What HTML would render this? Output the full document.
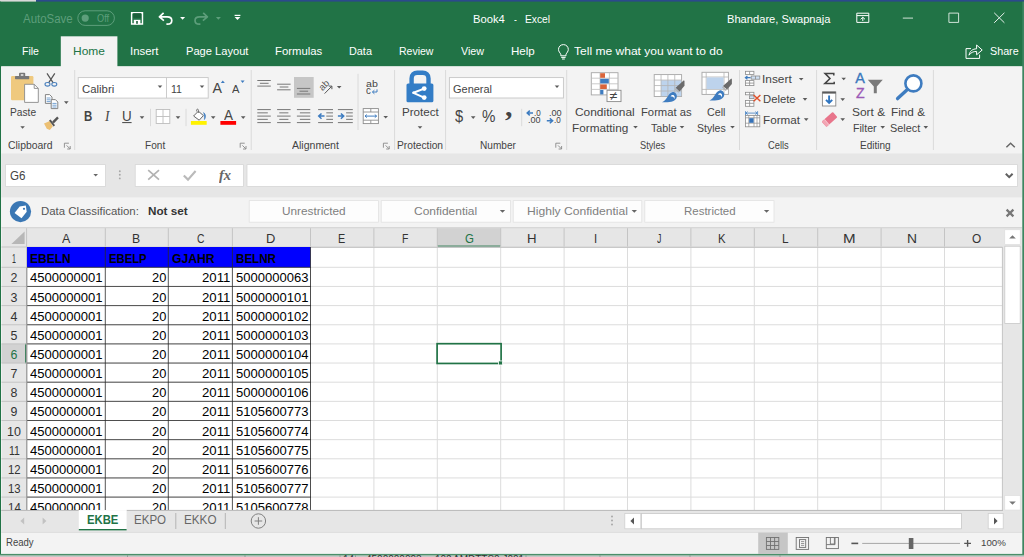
<!DOCTYPE html>
<html lang="en"><head><meta charset="utf-8"><title>Book4 - Excel</title>
<style>
html,body{margin:0;padding:0;}
body{width:1024px;height:557px;overflow:hidden;position:relative;background:#f3f3f3;font-family:"Liberation Sans", sans-serif;}
.t{position:absolute;white-space:pre;line-height:1;transform-origin:0 0;font-family:"Liberation Sans", sans-serif;}
svg{position:absolute;left:0;top:0;overflow:visible;}
</style></head><body>
<svg width="1024" height="557" viewBox="0 0 1024 557">
<rect x="0" y="0" width="1024" height="557" fill="#f3f3f3"/>
<rect x="0" y="0" width="1024" height="66.4" fill="#217346"/>
<rect x="0" y="0" width="36" height="1.6" fill="#d9d9d9"/>
<rect x="36" y="0" width="988" height="1.6" fill="#2b4a8c"/>
<rect x="60.8" y="36.3" width="56.6" height="30.7" fill="#f3f3f3"/>
<rect x="1.3" y="66.4" width="1021.1" height="87.1" fill="#f3f3f3"/>
<rect x="1.3" y="153.5" width="1020.7" height="44.1" fill="#e6e6e6"/>
<rect x="1.3" y="197.6" width="1020.7" height="30" fill="#f3f3f3"/>
<rect x="1.3" y="227.6" width="1020.7" height="282.4" fill="#ffffff"/>
<rect x="1.3" y="510" width="1020.7" height="22.4" fill="#e6e6e6"/>
<rect x="1.3" y="532.4" width="1020.7" height="21.6" fill="#f3f3f3"/>
<rect x="0" y="555.4" width="1024" height="1.6" fill="#c6c6c6"/>
<line x1="127.5" y1="555.4" x2="127.5" y2="557" stroke="#9a9a9a" stroke-width="1"/>
<line x1="245" y1="555.4" x2="245" y2="557" stroke="#9a9a9a" stroke-width="1"/>
<line x1="340" y1="555.4" x2="340" y2="557" stroke="#9a9a9a" stroke-width="1"/>
<line x1="355.5" y1="555.4" x2="355.5" y2="557" stroke="#9a9a9a" stroke-width="1"/>
<line x1="411" y1="555.4" x2="411" y2="557" stroke="#9a9a9a" stroke-width="1"/>
<line x1="450" y1="555.4" x2="450" y2="557" stroke="#9a9a9a" stroke-width="1"/>
<line x1="526" y1="555.4" x2="526" y2="557" stroke="#9a9a9a" stroke-width="1"/>
<line x1="600" y1="555.4" x2="600" y2="557" stroke="#9a9a9a" stroke-width="1"/>
<line x1="690" y1="555.4" x2="690" y2="557" stroke="#9a9a9a" stroke-width="1"/>
<line x1="780" y1="555.4" x2="780" y2="557" stroke="#9a9a9a" stroke-width="1"/>
<rect x="0" y="1.6" width="1" height="553.4" fill="#217346"/>
<rect x="1022.3" y="1.6" width="1.7" height="553.4" fill="#3d8560"/>
<rect x="0" y="553.9" width="1024" height="1.5" fill="#4a8f69"/>
<rect x="77.8" y="10.8" width="36.6" height="14.6" fill="none" stroke="#5d9e7b" stroke-width="1" rx="7.3"/>
<circle cx="85.2" cy="18.1" r="3.6" fill="#5d9e7b"/>
<path d="M131.6 12.7H142.5V24H131.6Z" fill="none" stroke="#ffffff" stroke-width="1.4"/>
<rect x="133.2" y="13.2" width="7.8" height="4.6" fill="#1b5e3a"/>
<rect x="133.8" y="19.8" width="6.6" height="4.4" fill="#ffffff"/>
<rect x="136.2" y="21" width="1.6" height="2.8" fill="#1b5e3a"/>
<path d="M163.6 12.8L159.4 16.8L163.9 20.6M159.8 16.8H167.2C173.2 16.8 173.4 24 167.2 24.2H166.4" fill="none" stroke="#ffffff" stroke-width="1.7" stroke-linejoin="round" stroke-linecap="butt"/>
<path d="M180.1 17H185.1L182.6 19.8Z" fill="#ffffff"/>
<path d="M203.2 12.8L207.4 16.8L202.9 20.6M207 16.8H199.6C193.6 16.8 193.4 24 199.6 24.2H200.4" fill="none" stroke="#5d9e7b" stroke-width="1.7" stroke-linejoin="round"/>
<path d="M215.9 17H220.9L218.4 19.8Z" fill="#5d9e7b"/>
<rect x="234.6" y="14.8" width="5.8" height="1.2" fill="#ffffff"/>
<path d="M234.6 17.1H240.4L237.5 20.1Z" fill="#ffffff"/>
<path d="M856.8 13.2H868.8V22.4H856.8Z" fill="none" stroke="#ffffff" stroke-width="1"/>
<line x1="856.8" y1="15.6" x2="868.8" y2="15.6" stroke="#ffffff" stroke-width="1"/>
<path d="M862.8 21V17.4M860.6 19.3L862.8 17.2L865 19.3" fill="none" stroke="#ffffff" stroke-width="1"/>
<line x1="902.8" y1="18.1" x2="913" y2="18.1" stroke="#e4efe9" stroke-width="0.9"/>
<path d="M948.9 13.1H958.6V22.4H948.9Z" fill="none" stroke="#e4efe9" stroke-width="0.9"/>
<path d="M994.2 12.8L1004.4 22.8M1004.4 12.8L994.2 22.8" fill="none" stroke="#e9f2ed" stroke-width="1"/>
<path d="M563.4 44.6C560.4 44.6 558.5 46.9 558.5 49.4C558.5 51.6 560 52.7 560.8 54.2V55.8H566V54.2C566.8 52.7 568.3 51.6 568.3 49.4C568.3 46.9 566.4 44.6 563.4 44.6Z" fill="none" stroke="#ffffff" stroke-width="1"/>
<line x1="561.2" y1="57.4" x2="565.6" y2="57.4" stroke="#ffffff" stroke-width="1"/>
<line x1="562" y1="59" x2="564.8" y2="59" stroke="#ffffff" stroke-width="1"/>
<path d="M971 48.6H966V58.4H979.6V54.6" fill="none" stroke="#ffffff" stroke-width="1"/>
<path d="M969 55.2C969.8 51 972.6 48.9 976.6 48.8V45L982.2 50L976.6 54.8V51.4C973.2 51.4 970.8 52.6 969 55.2Z" fill="none" stroke="#ffffff" stroke-width="1" stroke-linejoin="round"/>
<line x1="74.7" y1="70" x2="74.7" y2="150" stroke="#dadada" stroke-width="1"/>
<line x1="251.2" y1="70" x2="251.2" y2="150" stroke="#dadada" stroke-width="1"/>
<line x1="394.6" y1="70" x2="394.6" y2="150" stroke="#dadada" stroke-width="1"/>
<line x1="445.6" y1="70" x2="445.6" y2="150" stroke="#dadada" stroke-width="1"/>
<line x1="566.7" y1="70" x2="566.7" y2="150" stroke="#dadada" stroke-width="1"/>
<line x1="739.5" y1="70" x2="739.5" y2="150" stroke="#dadada" stroke-width="1"/>
<line x1="816.6" y1="70" x2="816.6" y2="150" stroke="#dadada" stroke-width="1"/>
<line x1="933.4" y1="70" x2="933.4" y2="150" stroke="#dadada" stroke-width="1"/>
<rect x="11" y="76" width="22.4" height="24.3" fill="#efc97e" rx="1.2"/>
<rect x="15" y="76" width="14.2" height="3.2" fill="#787878" rx="0.6"/>
<rect x="19" y="72.8" width="6.2" height="4.2" fill="#787878" rx="1"/>
<rect x="20.8" y="74.2" width="2.6" height="1.6" fill="#e8e8e8"/>
<path d="M24.6 84.3H34.2L38.3 88.4V102.4H24.6Z" fill="#ffffff" stroke="#8a8a8a" stroke-width="0.9"/>
<path d="M34.2 84.3V88.4H38.3" fill="none" stroke="#8a8a8a" stroke-width="0.9"/>
<path d="M20.3 126.2H24.9L22.6 128.8Z" fill="#5a5a5a"/>
<path d="M47 73.4L53.2 82.8M54.8 73.4L48.6 82.8" fill="none" stroke="#555" stroke-width="1.2"/>
<ellipse cx="47.5" cy="84.3" rx="2.5" ry="1.8" fill="none" stroke="#4a80bd" stroke-width="1.1"/>
<ellipse cx="54.3" cy="84.3" rx="2.5" ry="1.8" fill="none" stroke="#4a80bd" stroke-width="1.1"/>
<path d="M45.4 94.6H49.6L52 97V103.4H45.4Z" fill="#fff" stroke="#777" stroke-width="0.9"/>
<path d="M51.2 99.6H55.4L57.8 102V108.6H51.2Z" fill="#fff" stroke="#777" stroke-width="0.9"/>
<line x1="46.6" y1="98" x2="50.6" y2="98" stroke="#3e7cc0" stroke-width="0.7"/>
<line x1="46.6" y1="99.8" x2="50.6" y2="99.8" stroke="#3e7cc0" stroke-width="0.7"/>
<line x1="46.6" y1="101.6" x2="50.6" y2="101.6" stroke="#3e7cc0" stroke-width="0.7"/>
<line x1="52.4" y1="103.4" x2="56.6" y2="103.4" stroke="#3e7cc0" stroke-width="0.7"/>
<line x1="52.4" y1="105.2" x2="56.6" y2="105.2" stroke="#3e7cc0" stroke-width="0.7"/>
<line x1="52.4" y1="107" x2="56.6" y2="107" stroke="#3e7cc0" stroke-width="0.7"/>
<path d="M64 101.3H68.6L66.3 103.9Z" fill="#5a5a5a"/>
<path d="M44 123.6L49.8 121L52.8 126.4L49.8 129.9L46.8 128.8Z" fill="#ecc074"/>
<path d="M49 120.6L50.6 119.6L55 125.2L53.6 126.6Z" fill="#555"/>
<path d="M52.2 121.6L57.2 116.6L58.8 118.2L53.8 123.4Z" fill="#555"/>
<path d="M64.4 147.7V143.2H68.9" fill="none" stroke="#888" stroke-width="0.9"/>
<path d="M66.6 145.4L70 148.8M70.2 146V149H67.2" fill="none" stroke="#888" stroke-width="0.9"/>
<rect x="78.2" y="77.6" width="130" height="20.5" fill="#ffffff" stroke="#c6c6c6" stroke-width="0.9"/>
<line x1="166.5" y1="77.6" x2="166.5" y2="98.1" stroke="#c6c6c6" stroke-width="0.9"/>
<path d="M157.7 85.5H162.3L160 88.1Z" fill="#5a5a5a"/>
<path d="M199.7 85.5H204.3L202 88.1Z" fill="#5a5a5a"/>
<path d="M220.8 83L222.8 80.6L224.8 83Z" fill="#3e7cc0"/>
<path d="M240.6 80.6L242.6 83L244.6 80.6Z" fill="#3e7cc0"/>
<line x1="122.2" y1="122.6" x2="131.6" y2="122.6" stroke="#444444" stroke-width="1"/>
<path d="M139.7 116.3H144.3L142 118.9Z" fill="#5a5a5a"/>
<line x1="150.5" y1="108.8" x2="150.5" y2="126.2" stroke="#dadada" stroke-width="1"/>
<rect x="156.2" y="109.5" width="13.6" height="14" fill="#fff" stroke="#bdbdbd" stroke-width="0.9"/>
<line x1="163" y1="109.5" x2="163" y2="123.5" stroke="#bdbdbd" stroke-width="0.9"/>
<line x1="156.2" y1="116.5" x2="169.8" y2="116.5" stroke="#bdbdbd" stroke-width="0.9"/>
<path d="M175.7 116.3H180.3L178 118.9Z" fill="#5a5a5a"/>
<line x1="186" y1="108.8" x2="186" y2="126.2" stroke="#dadada" stroke-width="1"/>
<path d="M198.4 111.2L203.4 115.6L199.2 120.2L193.6 116Z" fill="#fff" stroke="#666" stroke-width="1"/>
<path d="M198.4 113V110.2C198.4 108.8 196.6 108.8 196.6 110.2V111.4" fill="none" stroke="#666" stroke-width="0.9"/>
<path d="M203.6 112.6C206 114.4 206 117.4 204.4 119.6C204.6 117 204.4 115 203.6 112.6Z" fill="#3e7cc0" stroke="#3e7cc0" stroke-width="0.6"/>
<rect x="190.9" y="121" width="15.8" height="3.8" fill="#fff200"/>
<path d="M210.9 116.3H215.5L213.2 118.9Z" fill="#5a5a5a"/>
<rect x="220.4" y="121" width="15.7" height="3.8" fill="#ff0000"/>
<path d="M240.9 116.3H245.5L243.2 118.9Z" fill="#5a5a5a"/>
<path d="M240.2 147.7V143.2H244.7" fill="none" stroke="#888" stroke-width="0.9"/>
<path d="M242.4 145.4L245.8 148.8M246 146V149H243" fill="none" stroke="#888" stroke-width="0.9"/>
<line x1="257.3" y1="80.5" x2="270.8" y2="80.5" stroke="#777777" stroke-width="1"/>
<line x1="259.9" y1="83.3" x2="268.6" y2="83.3" stroke="#777777" stroke-width="1"/>
<line x1="257.3" y1="86.1" x2="270.8" y2="86.1" stroke="#777777" stroke-width="1"/>
<line x1="277.1" y1="84.2" x2="290.6" y2="84.2" stroke="#777777" stroke-width="1"/>
<line x1="279.7" y1="87" x2="288.4" y2="87" stroke="#777777" stroke-width="1"/>
<line x1="277.1" y1="89.8" x2="290.6" y2="89.8" stroke="#777777" stroke-width="1"/>
<rect x="294" y="77" width="19.7" height="20.8" fill="#c6c6c6"/>
<line x1="296.9" y1="88.4" x2="310.3" y2="88.4" stroke="#777777" stroke-width="1"/>
<line x1="299.5" y1="91.2" x2="308.1" y2="91.2" stroke="#777777" stroke-width="1"/>
<line x1="296.9" y1="94" x2="310.3" y2="94" stroke="#777777" stroke-width="1"/>
<text x="0" y="0" transform="translate(322.4 91.2) rotate(-45)" font-family="Liberation Sans, sans-serif" font-size="9.5" fill="#555">ab</text>
<path d="M324.6 93.6L331.6 86.4M331.9 89.2V86.1H328.8" fill="none" stroke="#555" stroke-width="1"/>
<path d="M336.9 85.9H341.5L339.2 88.5Z" fill="#5a5a5a"/>
<line x1="358" y1="73.8" x2="358" y2="130" stroke="#dadada" stroke-width="1"/>
<path d="M377 89.4V92H372.6M374.4 90.2L372.4 92L374.4 93.8" fill="none" stroke="#3e7cc0" stroke-width="1"/>
<line x1="257.3" y1="109.6" x2="270.8" y2="109.6" stroke="#777777" stroke-width="1"/>
<line x1="257.3" y1="112.85" x2="267.8" y2="112.85" stroke="#777777" stroke-width="1"/>
<line x1="257.3" y1="116.1" x2="270.8" y2="116.1" stroke="#777777" stroke-width="1"/>
<line x1="257.3" y1="119.35" x2="267.8" y2="119.35" stroke="#777777" stroke-width="1"/>
<line x1="257.3" y1="122.6" x2="270.8" y2="122.6" stroke="#777777" stroke-width="1"/>
<line x1="277.1" y1="109.6" x2="290.6" y2="109.6" stroke="#777777" stroke-width="1"/>
<line x1="279.3" y1="112.85" x2="288.4" y2="112.85" stroke="#777777" stroke-width="1"/>
<line x1="277.1" y1="116.1" x2="290.6" y2="116.1" stroke="#777777" stroke-width="1"/>
<line x1="279.3" y1="119.35" x2="288.4" y2="119.35" stroke="#777777" stroke-width="1"/>
<line x1="277.1" y1="122.6" x2="290.6" y2="122.6" stroke="#777777" stroke-width="1"/>
<line x1="296.9" y1="109.6" x2="310.3" y2="109.6" stroke="#777777" stroke-width="1"/>
<line x1="299.9" y1="112.85" x2="310.3" y2="112.85" stroke="#777777" stroke-width="1"/>
<line x1="296.9" y1="116.1" x2="310.3" y2="116.1" stroke="#777777" stroke-width="1"/>
<line x1="299.9" y1="119.35" x2="310.3" y2="119.35" stroke="#777777" stroke-width="1"/>
<line x1="296.9" y1="122.6" x2="310.3" y2="122.6" stroke="#777777" stroke-width="1"/>
<line x1="318.1" y1="109.6" x2="333" y2="109.6" stroke="#777777" stroke-width="1"/>
<line x1="326.3" y1="112.85" x2="333" y2="112.85" stroke="#777777" stroke-width="1"/>
<line x1="326.3" y1="116.1" x2="333" y2="116.1" stroke="#777777" stroke-width="1"/>
<line x1="326.3" y1="119.35" x2="333" y2="119.35" stroke="#777777" stroke-width="1"/>
<line x1="318.1" y1="122.6" x2="333" y2="122.6" stroke="#777777" stroke-width="1"/>
<path d="M324.5 116.1H319.1M321.5 113.5L318.7 116.1L321.5 118.7" fill="none" stroke="#3e7cc0" stroke-width="1.5"/>
<line x1="337.9" y1="109.6" x2="352.8" y2="109.6" stroke="#777777" stroke-width="1"/>
<line x1="346.1" y1="112.85" x2="352.8" y2="112.85" stroke="#777777" stroke-width="1"/>
<line x1="346.1" y1="116.1" x2="352.8" y2="116.1" stroke="#777777" stroke-width="1"/>
<line x1="346.1" y1="119.35" x2="352.8" y2="119.35" stroke="#777777" stroke-width="1"/>
<line x1="337.9" y1="122.6" x2="352.8" y2="122.6" stroke="#777777" stroke-width="1"/>
<path d="M337.9 116.1H343.3M340.9 113.5L343.7 116.1L340.9 118.7" fill="none" stroke="#3e7cc0" stroke-width="1.5"/>
<rect x="363.2" y="108.6" width="15.2" height="15" fill="#fff" stroke="#8c8c8c" stroke-width="0.9"/>
<line x1="363.2" y1="112" x2="378.4" y2="112" stroke="#8c8c8c" stroke-width="0.9"/>
<line x1="363.2" y1="120.2" x2="378.4" y2="120.2" stroke="#8c8c8c" stroke-width="0.9"/>
<line x1="370.8" y1="108.6" x2="370.8" y2="112" stroke="#8c8c8c" stroke-width="0.9"/>
<line x1="370.8" y1="120.2" x2="370.8" y2="123.6" stroke="#8c8c8c" stroke-width="0.9"/>
<path d="M365 116.1H376.6M366.8 114.6L365 116.1L366.8 117.6M374.8 114.6L376.6 116.1L374.8 117.6" fill="none" stroke="#3e7cc0" stroke-width="1"/>
<path d="M383.4 115.9H388L385.7 118.5Z" fill="#5a5a5a"/>
<path d="M383.4 147.7V143.2H387.9" fill="none" stroke="#888" stroke-width="0.9"/>
<path d="M385.6 145.4L389 148.8M389.2 146V149H386.2" fill="none" stroke="#888" stroke-width="0.9"/>
<path d="M411.6 84V78.4C411.6 74.6 414 72.8 417.2 72.8H422.8C426 72.8 428.5 74.6 428.5 78.4V84" fill="none" stroke="#337dc6" stroke-width="4.4"/>
<rect x="406.5" y="83.5" width="26.9" height="18.8" fill="#337dc6" rx="1.6"/>
<path d="M424.1 88.6L413.4 92.8L424.1 97.6" fill="none" stroke="#fff" stroke-width="2" stroke-linejoin="round" stroke-linecap="round"/>
<circle cx="424.2" cy="88.6" r="2.4" fill="#fff"/>
<circle cx="424.2" cy="97.6" r="2.4" fill="#fff"/>
<circle cx="413.6" cy="92.8" r="1.3" fill="#fff"/>
<path d="M417.7 126.2H422.3L420 128.8Z" fill="#5a5a5a"/>
<rect x="449.4" y="77.6" width="114" height="20.4" fill="#ffffff" stroke="#c6c6c6" stroke-width="0.9"/>
<path d="M554.7 85.5H559.3L557 88.1Z" fill="#5a5a5a"/>
<path d="M470.9 116.3H475.5L473.2 118.9Z" fill="#5a5a5a"/>
<line x1="521.7" y1="108.8" x2="521.7" y2="126.2" stroke="#dadada" stroke-width="1"/>
<path d="M527.4 113H533M529.8 110.6L527.2 113L529.8 115.4" fill="none" stroke="#3e7cc0" stroke-width="1.5"/>
<path d="M546.8 120.8H552.4M549.8 118.4L552.6 120.8L549.8 123.2" fill="none" stroke="#3e7cc0" stroke-width="1.5"/>
<path d="M555.8 147.7V143.2H560.3" fill="none" stroke="#888" stroke-width="0.9"/>
<path d="M558 145.4L561.4 148.8M561.6 146V149H558.6" fill="none" stroke="#888" stroke-width="0.9"/>
<rect x="591.3" y="72.7" width="26.7" height="22.2" fill="#fff" stroke="#a6a6a6" stroke-width="0.9"/>
<line x1="591.3" y1="78.2" x2="618" y2="78.2" stroke="#bdbdbd" stroke-width="0.8"/>
<line x1="591.3" y1="83.8" x2="618" y2="83.8" stroke="#bdbdbd" stroke-width="0.8"/>
<line x1="591.3" y1="89.4" x2="618" y2="89.4" stroke="#bdbdbd" stroke-width="0.8"/>
<line x1="600" y1="72.7" x2="600" y2="94.9" stroke="#bdbdbd" stroke-width="0.8"/>
<line x1="609.4" y1="72.7" x2="609.4" y2="94.9" stroke="#bdbdbd" stroke-width="0.8"/>
<rect x="600.2" y="73.2" width="4.8" height="4.6" fill="#d9643a"/>
<rect x="600.2" y="78.8" width="8.6" height="4.6" fill="#3e7cc0"/>
<rect x="600.2" y="84.4" width="6.6" height="4.6" fill="#d9643a"/>
<rect x="600.2" y="90" width="3.2" height="4.4" fill="#3e7cc0"/>
<rect x="607" y="90.3" width="14" height="11.3" fill="#fff" stroke="#8a8a8a" stroke-width="0.9"/>
<path d="M633.2 125.9H637.8L635.5 128.5Z" fill="#5a5a5a"/>
<rect x="654.2" y="74.6" width="27.4" height="21.9" fill="#fff" stroke="#a6a6a6" stroke-width="0.9"/>
<rect x="661" y="80.2" width="20.2" height="15.9" fill="#bdd3ec"/>
<line x1="661.05" y1="74.6" x2="661.05" y2="96.5" stroke="#b4b4b4" stroke-width="0.8"/>
<line x1="667.9" y1="74.6" x2="667.9" y2="96.5" stroke="#b4b4b4" stroke-width="0.8"/>
<line x1="674.75" y1="74.6" x2="674.75" y2="96.5" stroke="#b4b4b4" stroke-width="0.8"/>
<line x1="654.2" y1="80.07" x2="681.6" y2="80.07" stroke="#b4b4b4" stroke-width="0.8"/>
<line x1="654.2" y1="85.55" x2="681.6" y2="85.55" stroke="#b4b4b4" stroke-width="0.8"/>
<line x1="654.2" y1="91.03" x2="681.6" y2="91.03" stroke="#b4b4b4" stroke-width="0.8"/>
<path d="M683.9 80.3L684.5 81L684.5 85.8L679.6 91.4L675.6 87.8Z" fill="#6b6b6b"/>
<path d="M674.6 89L675.4 88.2L679.2 91.8L678.4 92.8Z" fill="#b0b0b0"/>
<path d="M662 102.2C667.4 100.2 667.6 93.6 672.2 92.2C674.4 91.6 677.4 94 676.8 97C675.8 101.8 669 102.8 662 102.2Z" fill="#3e7cc0"/>
<path d="M670.6 96.6C672.2 93.6 676 95.4 674.2 99.2C674.2 97 672.8 96 670.6 96.6Z" fill="#fff"/>
<path d="M679.7 125.9H684.3L682 128.5Z" fill="#5a5a5a"/>
<rect x="702" y="72.3" width="26.4" height="22.1" fill="#fff" stroke="#a6a6a6" stroke-width="0.9"/>
<line x1="702" y1="77" x2="728.4" y2="77" stroke="#b4b4b4" stroke-width="0.8"/>
<line x1="702" y1="89.4" x2="728.4" y2="89.4" stroke="#b4b4b4" stroke-width="0.8"/>
<line x1="706.2" y1="72.3" x2="706.2" y2="94.4" stroke="#b4b4b4" stroke-width="0.8"/>
<line x1="724" y1="72.3" x2="724" y2="94.4" stroke="#b4b4b4" stroke-width="0.8"/>
<rect x="706.6" y="77.4" width="17" height="11.6" fill="#bdd3ec"/>
<path d="M731.3 78.5L731.9 79.2L731.9 84L727 89.6L723 86Z" fill="#6b6b6b"/>
<path d="M722 87.2L722.8 86.4L726.6 90L725.8 91Z" fill="#b0b0b0"/>
<path d="M709.4 100.4C714.8 98.4 715 91.8 719.6 90.4C721.8 89.8 724.8 92.2 724.2 95.2C723.2 100 716.4 101 709.4 100.4Z" fill="#3e7cc0"/>
<path d="M718 94.8C719.6 91.8 723.4 93.6 721.6 97.4C721.6 95.2 720.2 94.2 718 94.8Z" fill="#fff"/>
<path d="M730.2 125.9H734.8L732.5 128.5Z" fill="#5a5a5a"/>
<rect x="745.4" y="71.3" width="8.5" height="3.2" fill="#fff" stroke="#8c8c8c" stroke-width="0.8"/>
<line x1="749.6" y1="71.3" x2="749.6" y2="74.5" stroke="#8c8c8c" stroke-width="0.8"/>
<rect x="751.2" y="76" width="8.6" height="3.2" fill="#cfe0f3" stroke="#8c8c8c" stroke-width="0.8"/>
<line x1="755.5" y1="76" x2="755.5" y2="79.2" stroke="#8c8c8c" stroke-width="0.8"/>
<path d="M750.6 77.7H745.6M747.4 76L745.4 77.7L747.4 79.4" fill="none" stroke="#3e7cc0" stroke-width="1.2"/>
<rect x="745.4" y="80.6" width="8.5" height="5" fill="#fff" stroke="#8c8c8c" stroke-width="0.8"/>
<line x1="749.6" y1="80.6" x2="749.6" y2="85.6" stroke="#8c8c8c" stroke-width="0.8"/>
<line x1="745.4" y1="83.1" x2="753.9" y2="83.1" stroke="#8c8c8c" stroke-width="0.8"/>
<path d="M798.9 77.9H803.5L801.2 80.5Z" fill="#5a5a5a"/>
<rect x="745.4" y="92.3" width="8.5" height="2.5" fill="#fff" stroke="#8c8c8c" stroke-width="0.8"/>
<line x1="749.6" y1="92.3" x2="749.6" y2="94.8" stroke="#8c8c8c" stroke-width="0.8"/>
<rect x="749.6" y="95.8" width="4.4" height="2.8" fill="#cfe0f3" stroke="#8c8c8c" stroke-width="0.8"/>
<rect x="745.4" y="100.4" width="8.5" height="5.9" fill="#fff" stroke="#8c8c8c" stroke-width="0.8"/>
<line x1="749.6" y1="100.4" x2="749.6" y2="106.3" stroke="#8c8c8c" stroke-width="0.8"/>
<line x1="745.4" y1="103.3" x2="753.9" y2="103.3" stroke="#8c8c8c" stroke-width="0.8"/>
<path d="M753.6 95L760.4 101.2M760.4 95L753.6 101.2" fill="none" stroke="#e0522d" stroke-width="1.5"/>
<path d="M802.7 98.1H807.3L805 100.7Z" fill="#5a5a5a"/>
<rect x="745.4" y="115.4" width="14.4" height="11.4" fill="#fff" stroke="#8c8c8c" stroke-width="0.8"/>
<line x1="748.8" y1="115.4" x2="748.8" y2="126.8" stroke="#8c8c8c" stroke-width="0.7"/>
<line x1="754" y1="115.4" x2="754" y2="126.8" stroke="#8c8c8c" stroke-width="0.7"/>
<line x1="757" y1="115.4" x2="757" y2="126.8" stroke="#8c8c8c" stroke-width="0.7"/>
<line x1="745.4" y1="117.8" x2="759.8" y2="117.8" stroke="#8c8c8c" stroke-width="0.7"/>
<line x1="745.4" y1="123.2" x2="759.8" y2="123.2" stroke="#8c8c8c" stroke-width="0.7"/>
<rect x="749.2" y="118.2" width="4.4" height="4.6" fill="#3572b8"/>
<path d="M746 113.1H757M747.6 111.6L746 113.1L747.6 114.6M755.4 111.6L757 113.1L755.4 114.6M745.5 111.2V115M757.6 111.2V115" fill="none" stroke="#3e7cc0" stroke-width="0.8"/>
<path d="M803.9 118.3H808.5L806.2 120.9Z" fill="#5a5a5a"/>
<path d="M833.8 75.4V73.4H825L830 78.5L824.8 83.6H834.2V81.8" fill="none" stroke="#444" stroke-width="1.5" stroke-linejoin="miter"/>
<path d="M841.4 77.7H846L843.7 80.3Z" fill="#5a5a5a"/>
<rect x="822.4" y="92" width="13.4" height="14" fill="#fff" stroke="#888" stroke-width="0.9"/>
<rect x="822.4" y="91.6" width="13.4" height="2" fill="#5a5a5a"/>
<path d="M829.1 95.4V103M826 99.8L829.1 103L832.2 99.8" fill="none" stroke="#2f75c0" stroke-width="1.9"/>
<path d="M840.4 98.3H845L842.7 100.9Z" fill="#5a5a5a"/>
<g transform="rotate(-42 829.6 119.4)"><rect x="822.2" y="115.8" width="14.8" height="7.2" rx="1" fill="#e8758b"/><rect x="822.2" y="115.8" width="3.4" height="7.2" rx="1" fill="#f2a5b3"/><rect x="825.4" y="115.8" width="0.7" height="7.2" fill="#f8d5dc"/></g>
<path d="M840.4 118.3H845L842.7 120.9Z" fill="#5a5a5a"/>
<path d="M867.8 79.8H882.8L876.8 86.4V93.2H873.8V86.4Z" fill="#7a7a7a"/>
<path d="M880.4 126.1H885L882.7 128.7Z" fill="#5a5a5a"/>
<circle cx="913.4" cy="83.4" r="8" fill="#fff" stroke="#3e7cc0" stroke-width="2.6"/>
<path d="M907.4 89.6L897.6 98.6" fill="none" stroke="#3e7cc0" stroke-width="3.4" stroke-linecap="round"/>
<path d="M923.5 126.1H928.1L925.8 128.7Z" fill="#5a5a5a"/>
<path d="M1006.4 147.2L1010.6 143.2L1014.8 147.2" fill="none" stroke="#666" stroke-width="1.5"/>
<rect x="5.6" y="164.6" width="99.8" height="21.8" fill="#ffffff" stroke="#d6d6d6" stroke-width="0.8"/>
<rect x="135.2" y="164.6" width="108.2" height="21.8" fill="#ffffff" stroke="#d6d6d6" stroke-width="0.8"/>
<rect x="247" y="164.6" width="770.4" height="21.8" fill="#ffffff" stroke="#d6d6d6" stroke-width="0.8"/>
<path d="M93.4 173.9H98L95.7 176.5Z" fill="#666"/>
<circle cx="119.8" cy="171.2" r="0.95" fill="#a8a8a8"/>
<circle cx="119.8" cy="174.8" r="0.95" fill="#a8a8a8"/>
<circle cx="119.8" cy="178.4" r="0.95" fill="#a8a8a8"/>
<path d="M148.2 170.2L159 179.6M159 170.2L148.2 179.6" fill="none" stroke="#b2b2b2" stroke-width="1.7"/>
<path d="M183.8 175.4L188 179.6L195.6 171" fill="none" stroke="#bababa" stroke-width="2.1"/>
<path d="M1005.8 173.8L1009.2 177.2L1012.6 173.8" fill="none" stroke="#606060" stroke-width="2"/>
<circle cx="20.5" cy="211.6" r="10.6" fill="#3a77b4"/>
<path d="M14.4 212.2L20.4 206.4H26.6V212.6L20.6 218.4Z" fill="#fff" transform="rotate(-8 20.5 211.6)"/>
<circle cx="24" cy="208.8" r="1.1" fill="#3a77b4"/>
<rect x="249.2" y="200.6" width="129.2" height="21.6" fill="#fdfdfd" stroke="#e2e2e2" stroke-width="0.8"/>
<rect x="381.2" y="200.6" width="129.4" height="21.6" fill="#fdfdfd" stroke="#e2e2e2" stroke-width="0.8"/>
<rect x="513.2" y="200.6" width="128.6" height="21.6" fill="#fdfdfd" stroke="#e2e2e2" stroke-width="0.8"/>
<rect x="644.8" y="200.6" width="129.2" height="21.6" fill="#fdfdfd" stroke="#e2e2e2" stroke-width="0.8"/>
<path d="M499.8 210H505.2L502.5 212.8Z" fill="#666"/>
<path d="M631.6 210H637L634.3 212.8Z" fill="#666"/>
<path d="M763.9 210H769.3L766.6 212.8Z" fill="#666"/>
<path d="M1006.6 209.6L1013.4 216.4M1013.4 209.6L1006.6 216.4" fill="none" stroke="#777" stroke-width="2.2"/>
<rect x="1.5" y="227.7" width="1020.5" height="19.3" fill="#e6e6e6"/>
<rect x="1002.4" y="227.7" width="19.6" height="282.3" fill="#e6e6e6"/>
<rect x="1.5" y="247" width="25.1" height="263" fill="#e6e6e6"/>
<line x1="1.5" y1="227.7" x2="1022" y2="227.7" stroke="#d0d0d0" stroke-width="1"/>
<rect x="437.3" y="228.2" width="63.4" height="18.8" fill="#d2d2d2"/>
<rect x="437" y="245.6" width="64" height="1.5" fill="#217346"/>
<rect x="1.5" y="343.9" width="25.1" height="19.15" fill="#d2d2d2"/>
<rect x="25.2" y="343.6" width="1.8" height="19.75" fill="#217346"/>
<path d="M24.6 231.4V243.9H11.4Z" fill="#b7b7b7"/>
<line x1="26.6" y1="228.2" x2="26.6" y2="247" stroke="#c4c4c4" stroke-width="1"/>
<line x1="105.3" y1="228.2" x2="105.3" y2="247" stroke="#c4c4c4" stroke-width="1"/>
<line x1="168.3" y1="228.2" x2="168.3" y2="247" stroke="#c4c4c4" stroke-width="1"/>
<line x1="232.4" y1="228.2" x2="232.4" y2="247" stroke="#c4c4c4" stroke-width="1"/>
<line x1="310.5" y1="228.2" x2="310.5" y2="247" stroke="#c4c4c4" stroke-width="1"/>
<line x1="373.9" y1="228.2" x2="373.9" y2="247" stroke="#c4c4c4" stroke-width="1"/>
<line x1="437.3" y1="228.2" x2="437.3" y2="247" stroke="#c4c4c4" stroke-width="1"/>
<line x1="500.7" y1="228.2" x2="500.7" y2="247" stroke="#c4c4c4" stroke-width="1"/>
<line x1="564.1" y1="228.2" x2="564.1" y2="247" stroke="#c4c4c4" stroke-width="1"/>
<line x1="627.5" y1="228.2" x2="627.5" y2="247" stroke="#c4c4c4" stroke-width="1"/>
<line x1="690.9" y1="228.2" x2="690.9" y2="247" stroke="#c4c4c4" stroke-width="1"/>
<line x1="754.3" y1="228.2" x2="754.3" y2="247" stroke="#c4c4c4" stroke-width="1"/>
<line x1="817.7" y1="228.2" x2="817.7" y2="247" stroke="#c4c4c4" stroke-width="1"/>
<line x1="881.1" y1="228.2" x2="881.1" y2="247" stroke="#c4c4c4" stroke-width="1"/>
<line x1="944.5" y1="228.2" x2="944.5" y2="247" stroke="#c4c4c4" stroke-width="1"/>
<line x1="310.5" y1="247" x2="310.5" y2="510" stroke="#dcdcdc" stroke-width="1"/>
<line x1="373.9" y1="247" x2="373.9" y2="510" stroke="#dcdcdc" stroke-width="1"/>
<line x1="437.3" y1="247" x2="437.3" y2="510" stroke="#dcdcdc" stroke-width="1"/>
<line x1="500.7" y1="247" x2="500.7" y2="510" stroke="#dcdcdc" stroke-width="1"/>
<line x1="564.1" y1="247" x2="564.1" y2="510" stroke="#dcdcdc" stroke-width="1"/>
<line x1="627.5" y1="247" x2="627.5" y2="510" stroke="#dcdcdc" stroke-width="1"/>
<line x1="690.9" y1="247" x2="690.9" y2="510" stroke="#dcdcdc" stroke-width="1"/>
<line x1="754.3" y1="247" x2="754.3" y2="510" stroke="#dcdcdc" stroke-width="1"/>
<line x1="817.7" y1="247" x2="817.7" y2="510" stroke="#dcdcdc" stroke-width="1"/>
<line x1="881.1" y1="247" x2="881.1" y2="510" stroke="#dcdcdc" stroke-width="1"/>
<line x1="944.5" y1="247" x2="944.5" y2="510" stroke="#dcdcdc" stroke-width="1"/>
<line x1="26.6" y1="247" x2="1002.4" y2="247" stroke="#dcdcdc" stroke-width="1"/>
<line x1="1.5" y1="247" x2="26.6" y2="247" stroke="#c4c4c4" stroke-width="1"/>
<line x1="26.6" y1="267.3" x2="1002.4" y2="267.3" stroke="#dcdcdc" stroke-width="1"/>
<line x1="1.5" y1="267.3" x2="26.6" y2="267.3" stroke="#c4c4c4" stroke-width="1"/>
<line x1="26.6" y1="286.45" x2="1002.4" y2="286.45" stroke="#dcdcdc" stroke-width="1"/>
<line x1="1.5" y1="286.45" x2="26.6" y2="286.45" stroke="#c4c4c4" stroke-width="1"/>
<line x1="26.6" y1="305.6" x2="1002.4" y2="305.6" stroke="#dcdcdc" stroke-width="1"/>
<line x1="1.5" y1="305.6" x2="26.6" y2="305.6" stroke="#c4c4c4" stroke-width="1"/>
<line x1="26.6" y1="324.75" x2="1002.4" y2="324.75" stroke="#dcdcdc" stroke-width="1"/>
<line x1="1.5" y1="324.75" x2="26.6" y2="324.75" stroke="#c4c4c4" stroke-width="1"/>
<line x1="26.6" y1="343.9" x2="1002.4" y2="343.9" stroke="#dcdcdc" stroke-width="1"/>
<line x1="1.5" y1="343.9" x2="26.6" y2="343.9" stroke="#c4c4c4" stroke-width="1"/>
<line x1="26.6" y1="363.05" x2="1002.4" y2="363.05" stroke="#dcdcdc" stroke-width="1"/>
<line x1="1.5" y1="363.05" x2="26.6" y2="363.05" stroke="#c4c4c4" stroke-width="1"/>
<line x1="26.6" y1="382.2" x2="1002.4" y2="382.2" stroke="#dcdcdc" stroke-width="1"/>
<line x1="1.5" y1="382.2" x2="26.6" y2="382.2" stroke="#c4c4c4" stroke-width="1"/>
<line x1="26.6" y1="401.35" x2="1002.4" y2="401.35" stroke="#dcdcdc" stroke-width="1"/>
<line x1="1.5" y1="401.35" x2="26.6" y2="401.35" stroke="#c4c4c4" stroke-width="1"/>
<line x1="26.6" y1="420.5" x2="1002.4" y2="420.5" stroke="#dcdcdc" stroke-width="1"/>
<line x1="1.5" y1="420.5" x2="26.6" y2="420.5" stroke="#c4c4c4" stroke-width="1"/>
<line x1="26.6" y1="439.65" x2="1002.4" y2="439.65" stroke="#dcdcdc" stroke-width="1"/>
<line x1="1.5" y1="439.65" x2="26.6" y2="439.65" stroke="#c4c4c4" stroke-width="1"/>
<line x1="26.6" y1="458.8" x2="1002.4" y2="458.8" stroke="#dcdcdc" stroke-width="1"/>
<line x1="1.5" y1="458.8" x2="26.6" y2="458.8" stroke="#c4c4c4" stroke-width="1"/>
<line x1="26.6" y1="477.95" x2="1002.4" y2="477.95" stroke="#dcdcdc" stroke-width="1"/>
<line x1="1.5" y1="477.95" x2="26.6" y2="477.95" stroke="#c4c4c4" stroke-width="1"/>
<line x1="26.6" y1="497.1" x2="1002.4" y2="497.1" stroke="#dcdcdc" stroke-width="1"/>
<line x1="1.5" y1="497.1" x2="26.6" y2="497.1" stroke="#c4c4c4" stroke-width="1"/>
<line x1="26.6" y1="247.3" x2="1002.4" y2="247.3" stroke="#c0c0c0" stroke-width="1"/>
<line x1="26.6" y1="247" x2="26.6" y2="510" stroke="#c0c0c0" stroke-width="1"/>
<rect x="27" y="247" width="283.5" height="20.3" fill="#0000ff"/>
<line x1="27.1" y1="267.3" x2="310.9" y2="267.3" stroke="#2a2a2a" stroke-width="0.8"/>
<line x1="27.1" y1="286.45" x2="310.9" y2="286.45" stroke="#2a2a2a" stroke-width="0.8"/>
<line x1="27.1" y1="305.6" x2="310.9" y2="305.6" stroke="#2a2a2a" stroke-width="0.8"/>
<line x1="27.1" y1="324.75" x2="310.9" y2="324.75" stroke="#2a2a2a" stroke-width="0.8"/>
<line x1="27.1" y1="343.9" x2="310.9" y2="343.9" stroke="#2a2a2a" stroke-width="0.8"/>
<line x1="27.1" y1="363.05" x2="310.9" y2="363.05" stroke="#2a2a2a" stroke-width="0.8"/>
<line x1="27.1" y1="382.2" x2="310.9" y2="382.2" stroke="#2a2a2a" stroke-width="0.8"/>
<line x1="27.1" y1="401.35" x2="310.9" y2="401.35" stroke="#2a2a2a" stroke-width="0.8"/>
<line x1="27.1" y1="420.5" x2="310.9" y2="420.5" stroke="#2a2a2a" stroke-width="0.8"/>
<line x1="27.1" y1="439.65" x2="310.9" y2="439.65" stroke="#2a2a2a" stroke-width="0.8"/>
<line x1="27.1" y1="458.8" x2="310.9" y2="458.8" stroke="#2a2a2a" stroke-width="0.8"/>
<line x1="27.1" y1="477.95" x2="310.9" y2="477.95" stroke="#2a2a2a" stroke-width="0.8"/>
<line x1="27.1" y1="497.1" x2="310.9" y2="497.1" stroke="#2a2a2a" stroke-width="0.8"/>
<line x1="105.3" y1="247" x2="105.3" y2="510" stroke="#2a2a2a" stroke-width="0.8"/>
<line x1="168.3" y1="247" x2="168.3" y2="510" stroke="#2a2a2a" stroke-width="0.8"/>
<line x1="232.4" y1="247" x2="232.4" y2="510" stroke="#2a2a2a" stroke-width="0.8"/>
<line x1="310.5" y1="247" x2="310.5" y2="510" stroke="#2a2a2a" stroke-width="0.8"/>
<line x1="26.9" y1="267.3" x2="26.9" y2="510" stroke="#777" stroke-width="0.7"/>
<line x1="1002.4" y1="247" x2="1002.4" y2="510" stroke="#c4c4c4" stroke-width="1"/>
<rect x="437.1" y="343.7" width="64" height="19.75" fill="#ffffff" stroke="#217346" stroke-width="1.7"/>
<rect x="498.6" y="360.95" width="3.9" height="4" fill="#217346" stroke="#ffffff" stroke-width="0.8"/>
<rect x="1004.8" y="229.8" width="15.4" height="14.6" fill="#ffffff" stroke="#dcdcdc" stroke-width="0.6"/>
<path d="M1009.2 238.6L1012.5 235.2L1015.8 238.6Z" fill="#777"/>
<rect x="1004.8" y="246.2" width="15.4" height="77.2" fill="#ffffff" stroke="#c8c8c8" stroke-width="0.8"/>
<rect x="1004.8" y="495.6" width="15.4" height="14.4" fill="#ffffff" stroke="#dcdcdc" stroke-width="0.6"/>
<path d="M1009.2 501.4L1012.5 504.8L1015.8 501.4Z" fill="#777"/>
<line x1="1.3" y1="510.4" x2="78.8" y2="510.4" stroke="#b8b8b8" stroke-width="1"/>
<line x1="126.6" y1="510.4" x2="1003" y2="510.4" stroke="#b8b8b8" stroke-width="1"/>
<path d="M24.2 517.4L20.4 521L24.2 524.6Z" fill="#c2c2c2"/>
<path d="M42.6 517.4L46.4 521L42.6 524.6Z" fill="#c2c2c2"/>
<rect x="78.8" y="510.2" width="47.8" height="20.2" fill="#ffffff"/>
<rect x="78.8" y="529" width="47.8" height="1.4" fill="#217346"/>
<line x1="175.8" y1="513" x2="175.8" y2="529" stroke="#b4b4b4" stroke-width="1"/>
<line x1="225.3" y1="513" x2="225.3" y2="529" stroke="#b4b4b4" stroke-width="1"/>
<circle cx="258.4" cy="521" r="7.2" fill="none" stroke="#808080" stroke-width="1"/>
<path d="M254.6 521H262.2M258.4 517.2V524.8" fill="none" stroke="#808080" stroke-width="1"/>
<circle cx="612" cy="516.6" r="1" fill="#a8a8a8"/>
<circle cx="612" cy="520.5" r="1" fill="#a8a8a8"/>
<circle cx="612" cy="524.4" r="1" fill="#a8a8a8"/>
<rect x="624.8" y="513.5" width="16" height="15.3" fill="#ffffff" stroke="#cfcfcf" stroke-width="0.8"/>
<path d="M634 517.6L630.4 521.1L634 524.6Z" fill="#555"/>
<rect x="641.4" y="513.5" width="320" height="15.3" fill="#ffffff" stroke="#c8c8c8" stroke-width="0.8"/>
<rect x="988.2" y="513.5" width="15" height="15.3" fill="#ffffff" stroke="#cfcfcf" stroke-width="0.8"/>
<path d="M994 517.6L997.6 521.1L994 524.6Z" fill="#555"/>
<line x1="1.3" y1="532.4" x2="1022" y2="532.4" stroke="#dddddd" stroke-width="1"/>
<rect x="758.2" y="532.6" width="29.6" height="21.4" fill="#c6c6c6"/>
<rect x="766.4" y="537.5" width="12.4" height="11.9" fill="none" stroke="#707070" stroke-width="0.9"/>
<line x1="770.5" y1="537.5" x2="770.5" y2="549.4" stroke="#707070" stroke-width="0.9"/>
<line x1="774.6" y1="537.5" x2="774.6" y2="549.4" stroke="#707070" stroke-width="0.9"/>
<line x1="766.4" y1="541.5" x2="778.8" y2="541.5" stroke="#707070" stroke-width="0.9"/>
<line x1="766.4" y1="545.5" x2="778.8" y2="545.5" stroke="#707070" stroke-width="0.9"/>
<rect x="796.2" y="537.5" width="12.4" height="11.9" fill="none" stroke="#707070" stroke-width="0.9"/>
<rect x="799.5" y="539.6" width="6.2" height="7.8" fill="none" stroke="#707070" stroke-width="0.9"/>
<line x1="801" y1="541.6" x2="804.2" y2="541.6" stroke="#707070" stroke-width="0.7"/>
<line x1="801" y1="543.5" x2="804.2" y2="543.5" stroke="#707070" stroke-width="0.7"/>
<line x1="801" y1="545.4" x2="804.2" y2="545.4" stroke="#707070" stroke-width="0.7"/>
<rect x="826.3" y="537.5" width="12.1" height="11.1" fill="none" stroke="#707070" stroke-width="0.9"/>
<path d="M830.4 537.5V544H834.4V537.5M826.3 544.6H835V537.5" fill="none" stroke="#707070" stroke-width="0.9"/>
<line x1="851.4" y1="543.4" x2="858.2" y2="543.4" stroke="#555" stroke-width="1.6"/>
<line x1="862.2" y1="543.4" x2="960" y2="543.4" stroke="#a6a6a6" stroke-width="1"/>
<rect x="908.8" y="538" width="4.6" height="11" fill="#666"/>
<path d="M964.2 543.4H971M967.6 540V546.8" fill="none" stroke="#555" stroke-width="1.4"/>
</svg>
<span class="t" style="left:23.20px;top:13.30px;font-size:12px;color:#5d9e7b;transform:scaleX(0.9549);">AutoSave</span>
<span class="t" style="left:96.50px;top:12.80px;font-size:11px;color:#5d9e7b;transform:scaleX(0.8369);">Off</span>
<span class="t" style="left:473.20px;top:13.55px;font-size:11.5px;color:#ffffff;transform:scaleX(0.9756);">Book4</span>
<span class="t" style="left:514.20px;top:13.55px;font-size:11.5px;color:#ffffff;transform:scaleX(0.7500);">-</span>
<span class="t" style="left:524.60px;top:13.55px;font-size:11.5px;color:#ffffff;transform:scaleX(0.8924);">Excel</span>
<span class="t" style="left:726.60px;top:13.55px;font-size:11.5px;color:#ffffff;transform:scaleX(0.9685);">Bhandare, Swapnaja</span>
<span class="t" style="left:21.60px;top:45.65px;font-size:11.3px;color:#ffffff;transform:scaleX(0.9319);">File</span>
<span class="t" style="left:73.30px;top:45.65px;font-size:11.3px;color:#217346;transform:scaleX(1.0586);">Home</span>
<span class="t" style="left:130.19px;top:45.65px;font-size:11.3px;color:#ffffff;transform:scaleX(1.0102);">Insert</span>
<span class="t" style="left:186.00px;top:45.65px;font-size:11.3px;color:#ffffff;transform:scaleX(0.9844);">Page Layout</span>
<span class="t" style="left:275.00px;top:45.65px;font-size:11.3px;color:#ffffff;transform:scaleX(1.0036);">Formulas</span>
<span class="t" style="left:349.00px;top:45.65px;font-size:11.3px;color:#ffffff;transform:scaleX(0.9601);">Data</span>
<span class="t" style="left:399.20px;top:45.65px;font-size:11.3px;color:#ffffff;transform:scaleX(0.9292);">Review</span>
<span class="t" style="left:460.50px;top:45.65px;font-size:11.3px;color:#ffffff;transform:scaleX(0.9513);">View</span>
<span class="t" style="left:510.70px;top:45.65px;font-size:11.3px;color:#ffffff;transform:scaleX(1.0239);">Help</span>
<span class="t" style="left:574.30px;top:45.65px;font-size:11.3px;color:#ffffff;transform:scaleX(1.0660);">Tell me what you want to do</span>
<span class="t" style="left:989.60px;top:45.65px;font-size:11.3px;color:#ffffff;transform:scaleX(0.9510);">Share</span>
<span class="t" style="left:9.60px;top:106.85px;font-size:10.9px;color:#444444;transform:scaleX(0.9355);">Paste</span>
<span class="t" style="left:7.50px;top:139.85px;font-size:10.9px;color:#444444;transform:scaleX(0.9558);">Clipboard</span>
<span class="t" style="left:81.60px;top:83.85px;font-size:10.9px;color:#444444;transform:scaleX(1.0445);">Calibri</span>
<span class="t" style="left:170.90px;top:83.85px;font-size:10.9px;color:#444444;transform:scaleX(0.9691);">11</span>
<span class="t" style="left:212.60px;top:81.20px;font-size:14.2px;color:#444444;transform:scaleX(1.0000);">A</span>
<span class="t" style="left:232.40px;top:83.85px;font-size:10.9px;color:#444444;transform:scaleX(1.0250);">A</span>
<span class="t" style="left:83.80px;top:109.30px;font-size:14px;color:#444444;transform:scaleX(0.8200);font-weight:bold;">B</span>
<span class="t" style="left:105.23px;top:109.05px;font-size:14.5px;color:#444444;transform:scaleX(0.9286);font-style:italic;font-family:'Liberation Serif', serif;">I</span>
<span class="t" style="left:121.64px;top:109.30px;font-size:14px;color:#444444;transform:scaleX(0.9556);">U</span>
<span class="t" style="left:223.50px;top:108.20px;font-size:14.2px;color:#444444;transform:scaleX(0.9500);">A</span>
<span class="t" style="left:145.00px;top:139.85px;font-size:10.9px;color:#444444;transform:scaleX(0.9280);">Font</span>
<span class="t" style="left:365.60px;top:79.80px;font-size:9px;color:#444444;transform:scaleX(1.1794);">ab</span>
<span class="t" style="left:365.80px;top:85.80px;font-size:10px;color:#444444;transform:scaleX(0.9600);">c</span>
<span class="t" style="left:291.80px;top:139.85px;font-size:10.9px;color:#444444;transform:scaleX(0.9669);">Alignment</span>
<span class="t" style="left:402.00px;top:106.85px;font-size:10.9px;color:#444444;transform:scaleX(1.0674);">Protect</span>
<span class="t" style="left:397.00px;top:139.85px;font-size:10.9px;color:#444444;transform:scaleX(0.9392);">Protection</span>
<span class="t" style="left:452.60px;top:83.85px;font-size:10.9px;color:#444444;transform:scaleX(1.0072);">General</span>
<span class="t" style="left:455.20px;top:108.30px;font-size:17px;color:#444444;transform:scaleX(0.8600);">$</span>
<span class="t" style="left:481.80px;top:108.80px;font-size:16px;color:#444444;transform:scaleX(0.9429);">%</span>
<span class="t" style="left:505.00px;top:92.80px;font-size:28px;color:#444444;transform:scaleX(1.0667);font-weight:bold;font-family:'Liberation Serif', serif;">,</span>
<span class="t" style="left:534.40px;top:109.05px;font-size:8.5px;color:#444444;transform:scaleX(0.9509);">.0</span>
<span class="t" style="left:528.40px;top:116.05px;font-size:8.5px;color:#444444;transform:scaleX(1.0588);">.00</span>
<span class="t" style="left:548.60px;top:109.05px;font-size:8.5px;color:#444444;transform:scaleX(1.0754);">.00</span>
<span class="t" style="left:554.40px;top:116.05px;font-size:8.5px;color:#444444;transform:scaleX(0.9509);">.0</span>
<span class="t" style="left:480.00px;top:139.85px;font-size:10.9px;color:#444444;transform:scaleX(0.9257);">Number</span>
<span class="t" style="left:609.36px;top:89.30px;font-size:13px;color:#444;transform:scaleX(0.8444);font-family:'DejaVu Sans', sans-serif;">≠</span>
<span class="t" style="left:575.00px;top:106.85px;font-size:10.9px;color:#444444;transform:scaleX(1.0949);">Conditional</span>
<span class="t" style="left:571.80px;top:122.85px;font-size:10.9px;color:#444444;transform:scaleX(1.0809);">Formatting</span>
<span class="t" style="left:641.20px;top:106.85px;font-size:10.9px;color:#444444;transform:scaleX(1.0328);">Format as</span>
<span class="t" style="left:650.60px;top:122.85px;font-size:10.9px;color:#444444;transform:scaleX(0.9855);">Table</span>
<span class="t" style="left:707.00px;top:106.85px;font-size:10.9px;color:#444444;transform:scaleX(0.9814);">Cell</span>
<span class="t" style="left:697.00px;top:122.85px;font-size:10.9px;color:#444444;transform:scaleX(0.9665);">Styles</span>
<span class="t" style="left:640.00px;top:139.85px;font-size:10.9px;color:#444444;transform:scaleX(0.8474);">Styles</span>
<span class="t" style="left:761.91px;top:73.85px;font-size:10.9px;color:#444444;transform:scaleX(1.0911);">Insert</span>
<span class="t" style="left:763.00px;top:93.85px;font-size:10.9px;color:#444444;transform:scaleX(1.0374);">Delete</span>
<span class="t" style="left:763.00px;top:114.85px;font-size:10.9px;color:#444444;transform:scaleX(1.0736);">Format</span>
<span class="t" style="left:767.60px;top:139.85px;font-size:10.9px;color:#444444;transform:scaleX(0.8562);">Cells</span>
<span class="t" style="left:855.30px;top:71.10px;font-size:14.4px;color:#3a78bd;transform:scaleX(1.0000);-webkit-text-stroke:0.35px #3a78bd;">A</span>
<span class="t" style="left:855.80px;top:85.90px;font-size:14.8px;color:#9b59b6;transform:scaleX(0.9556);-webkit-text-stroke:0.35px #9b59b6;">Z</span>
<span class="t" style="left:851.80px;top:106.85px;font-size:10.9px;color:#444444;transform:scaleX(1.0968);">Sort &amp;</span>
<span class="t" style="left:852.60px;top:122.85px;font-size:10.9px;color:#444444;transform:scaleX(0.9766);">Filter</span>
<span class="t" style="left:891.40px;top:106.85px;font-size:10.9px;color:#444444;transform:scaleX(1.0804);">Find &amp;</span>
<span class="t" style="left:889.80px;top:122.85px;font-size:10.9px;color:#444444;transform:scaleX(0.9986);">Select</span>
<span class="t" style="left:859.60px;top:139.85px;font-size:10.9px;color:#444444;transform:scaleX(0.9205);">Editing</span>
<span class="t" style="left:10.20px;top:170.30px;font-size:12px;color:#444;transform:scaleX(0.9673);">G6</span>
<span class="t" style="left:218.60px;top:167.80px;font-size:15px;color:#666;transform:scaleX(0.9696);font-weight:bold;font-style:italic;font-family:'Liberation Serif', serif;">fx</span>
<span class="t" style="left:40.60px;top:205.60px;font-size:11.4px;color:#555;transform:scaleX(1.0038);">Data Classification:</span>
<span class="t" style="left:148.00px;top:205.60px;font-size:11.4px;color:#333;transform:scaleX(1.0280);font-weight:bold;">Not set</span>
<span class="t" style="left:282.40px;top:205.55px;font-size:11.5px;color:#808080;transform:scaleX(1.0260);">Unrestricted</span>
<span class="t" style="left:414.20px;top:205.55px;font-size:11.5px;color:#808080;transform:scaleX(1.0402);">Confidential</span>
<span class="t" style="left:527.40px;top:205.55px;font-size:11.5px;color:#808080;transform:scaleX(1.0532);">Highly Confidential</span>
<span class="t" style="left:684.00px;top:205.55px;font-size:11.5px;color:#808080;transform:scaleX(0.9967);">Restricted</span>
<span class="t" style="left:87.00px;top:514.15px;font-size:12.3px;color:#217346;transform:scaleX(0.9187);font-weight:bold;">EKBE</span>
<span class="t" style="left:134.46px;top:514.15px;font-size:12.3px;color:#666;transform:scaleX(0.9385);">EKPO</span>
<span class="t" style="left:184.05px;top:514.15px;font-size:12.3px;color:#666;transform:scaleX(0.9508);">EKKO</span>
<span class="t" style="left:5.70px;top:537.80px;font-size:10px;color:#444;transform:scaleX(0.9548);">Ready</span>
<span class="t" style="left:980.90px;top:537.85px;font-size:9.9px;color:#444;transform:scaleX(0.9852);">100%</span>
<div style="position:absolute;left:0;top:0;width:1024px;height:510px;overflow:hidden">
<span class="t" style="left:61.50px;top:233.00px;font-size:12.6px;color:#333;transform:scaleX(0.9889);">A</span>
<span class="t" style="left:132.43px;top:233.00px;font-size:12.6px;color:#333;transform:scaleX(0.9714);">B</span>
<span class="t" style="left:196.65px;top:233.00px;font-size:12.6px;color:#333;transform:scaleX(0.8222);">C</span>
<span class="t" style="left:266.32px;top:233.00px;font-size:12.6px;color:#333;transform:scaleX(1.0250);">D</span>
<span class="t" style="left:338.34px;top:233.00px;font-size:12.6px;color:#333;transform:scaleX(0.8571);">E</span>
<span class="t" style="left:401.87px;top:233.00px;font-size:12.6px;color:#333;transform:scaleX(0.8286);">F</span>
<span class="t" style="left:464.90px;top:233.00px;font-size:12.6px;color:#217346;transform:scaleX(0.9111);">G</span>
<span class="t" style="left:527.15px;top:233.00px;font-size:12.6px;color:#333;transform:scaleX(1.0500);">H</span>
<span class="t" style="left:594.00px;top:233.00px;font-size:12.6px;color:#333;transform:scaleX(0.9000);">I</span>
<span class="t" style="left:657.10px;top:233.00px;font-size:12.6px;color:#333;transform:scaleX(0.7000);">J</span>
<span class="t" style="left:718.10px;top:233.00px;font-size:12.6px;color:#333;transform:scaleX(0.9000);">K</span>
<span class="t" style="left:782.27px;top:233.00px;font-size:12.6px;color:#333;transform:scaleX(0.9333);">L</span>
<span class="t" style="left:842.80px;top:233.00px;font-size:12.6px;color:#333;transform:scaleX(1.2000);">M</span>
<span class="t" style="left:907.30px;top:233.00px;font-size:12.6px;color:#333;transform:scaleX(1.1000);">N</span>
<span class="t" style="left:971.60px;top:233.00px;font-size:12.6px;color:#333;transform:scaleX(0.9400);">O</span>
<span class="t" style="left:11.60px;top:253.10px;font-size:12.4px;color:#333;transform:scaleX(0.5714);">1</span>
<span class="t" style="left:10.40px;top:272.10px;font-size:12.4px;color:#333;transform:scaleX(1.0000);">2</span>
<span class="t" style="left:10.40px;top:292.10px;font-size:12.4px;color:#333;transform:scaleX(1.0000);">3</span>
<span class="t" style="left:10.40px;top:311.10px;font-size:12.4px;color:#333;transform:scaleX(1.0000);">4</span>
<span class="t" style="left:10.40px;top:330.10px;font-size:12.4px;color:#333;transform:scaleX(1.0000);">5</span>
<span class="t" style="left:10.40px;top:349.10px;font-size:12.4px;color:#217346;transform:scaleX(1.0000);">6</span>
<span class="t" style="left:10.40px;top:368.10px;font-size:12.4px;color:#333;transform:scaleX(1.0000);">7</span>
<span class="t" style="left:10.40px;top:387.10px;font-size:12.4px;color:#333;transform:scaleX(1.0000);">8</span>
<span class="t" style="left:10.40px;top:406.10px;font-size:12.4px;color:#333;transform:scaleX(1.0000);">9</span>
<span class="t" style="left:7.20px;top:426.10px;font-size:12.4px;color:#333;transform:scaleX(1.0078);">10</span>
<span class="t" style="left:8.60px;top:445.10px;font-size:12.4px;color:#333;transform:scaleX(0.8481);">11</span>
<span class="t" style="left:8.10px;top:464.10px;font-size:12.4px;color:#333;transform:scaleX(0.9143);">12</span>
<span class="t" style="left:8.10px;top:483.10px;font-size:12.4px;color:#333;transform:scaleX(0.9143);">13</span>
<span class="t" style="left:8.10px;top:502.10px;font-size:12.4px;color:#333;transform:scaleX(0.9287);">14</span>
<span class="t" style="left:30.00px;top:252.30px;font-size:13px;color:#000;transform:scaleX(0.9228);font-weight:bold;">EBELN</span>
<span class="t" style="left:108.60px;top:252.30px;font-size:13px;color:#000;transform:scaleX(0.8679);font-weight:bold;">EBELP</span>
<span class="t" style="left:172.00px;top:252.30px;font-size:13px;color:#000;transform:scaleX(0.9367);font-weight:bold;">GJAHR</span>
<span class="t" style="left:236.00px;top:252.30px;font-size:13px;color:#000;transform:scaleX(0.8923);font-weight:bold;">BELNR</span>
<span class="t" style="left:30.20px;top:271.30px;font-size:13px;color:#000;transform:scaleX(1.0046);">4500000001</span>
<span class="t" style="left:152.20px;top:271.30px;font-size:13px;color:#000;transform:scaleX(0.9909);">20</span>
<span class="t" style="left:201.50px;top:271.30px;font-size:13px;color:#000;transform:scaleX(1.0135);">2011</span>
<span class="t" style="left:235.60px;top:271.30px;font-size:13px;color:#000;transform:scaleX(1.0018);">5000000063</span>
<span class="t" style="left:30.20px;top:291.30px;font-size:13px;color:#000;transform:scaleX(1.0046);">4500000001</span>
<span class="t" style="left:152.20px;top:291.30px;font-size:13px;color:#000;transform:scaleX(0.9909);">20</span>
<span class="t" style="left:201.50px;top:291.30px;font-size:13px;color:#000;transform:scaleX(1.0135);">2011</span>
<span class="t" style="left:235.60px;top:291.30px;font-size:13px;color:#000;transform:scaleX(1.0018);">5000000101</span>
<span class="t" style="left:30.20px;top:310.30px;font-size:13px;color:#000;transform:scaleX(1.0046);">4500000001</span>
<span class="t" style="left:152.20px;top:310.30px;font-size:13px;color:#000;transform:scaleX(0.9909);">20</span>
<span class="t" style="left:201.50px;top:310.30px;font-size:13px;color:#000;transform:scaleX(1.0135);">2011</span>
<span class="t" style="left:235.60px;top:310.30px;font-size:13px;color:#000;transform:scaleX(1.0018);">5000000102</span>
<span class="t" style="left:30.20px;top:329.30px;font-size:13px;color:#000;transform:scaleX(1.0046);">4500000001</span>
<span class="t" style="left:152.20px;top:329.30px;font-size:13px;color:#000;transform:scaleX(0.9909);">20</span>
<span class="t" style="left:201.50px;top:329.30px;font-size:13px;color:#000;transform:scaleX(1.0135);">2011</span>
<span class="t" style="left:235.60px;top:329.30px;font-size:13px;color:#000;transform:scaleX(1.0018);">5000000103</span>
<span class="t" style="left:30.20px;top:348.30px;font-size:13px;color:#000;transform:scaleX(1.0046);">4500000001</span>
<span class="t" style="left:152.20px;top:348.30px;font-size:13px;color:#000;transform:scaleX(0.9909);">20</span>
<span class="t" style="left:201.50px;top:348.30px;font-size:13px;color:#000;transform:scaleX(1.0135);">2011</span>
<span class="t" style="left:235.60px;top:348.30px;font-size:13px;color:#000;transform:scaleX(1.0018);">5000000104</span>
<span class="t" style="left:30.20px;top:367.30px;font-size:13px;color:#000;transform:scaleX(1.0046);">4500000001</span>
<span class="t" style="left:152.20px;top:367.30px;font-size:13px;color:#000;transform:scaleX(0.9909);">20</span>
<span class="t" style="left:201.50px;top:367.30px;font-size:13px;color:#000;transform:scaleX(1.0135);">2011</span>
<span class="t" style="left:235.60px;top:367.30px;font-size:13px;color:#000;transform:scaleX(1.0018);">5000000105</span>
<span class="t" style="left:30.20px;top:386.30px;font-size:13px;color:#000;transform:scaleX(1.0046);">4500000001</span>
<span class="t" style="left:152.20px;top:386.30px;font-size:13px;color:#000;transform:scaleX(0.9909);">20</span>
<span class="t" style="left:201.50px;top:386.30px;font-size:13px;color:#000;transform:scaleX(1.0135);">2011</span>
<span class="t" style="left:235.60px;top:386.30px;font-size:13px;color:#000;transform:scaleX(1.0018);">5000000106</span>
<span class="t" style="left:30.20px;top:405.30px;font-size:13px;color:#000;transform:scaleX(1.0046);">4500000001</span>
<span class="t" style="left:152.20px;top:405.30px;font-size:13px;color:#000;transform:scaleX(0.9909);">20</span>
<span class="t" style="left:201.50px;top:405.30px;font-size:13px;color:#000;transform:scaleX(1.0135);">2011</span>
<span class="t" style="left:235.60px;top:405.30px;font-size:13px;color:#000;transform:scaleX(1.0018);">5105600773</span>
<span class="t" style="left:30.20px;top:425.30px;font-size:13px;color:#000;transform:scaleX(1.0046);">4500000001</span>
<span class="t" style="left:152.20px;top:425.30px;font-size:13px;color:#000;transform:scaleX(0.9909);">20</span>
<span class="t" style="left:201.50px;top:425.30px;font-size:13px;color:#000;transform:scaleX(1.0135);">2011</span>
<span class="t" style="left:235.60px;top:425.30px;font-size:13px;color:#000;transform:scaleX(1.0018);">5105600774</span>
<span class="t" style="left:30.20px;top:444.30px;font-size:13px;color:#000;transform:scaleX(1.0046);">4500000001</span>
<span class="t" style="left:152.20px;top:444.30px;font-size:13px;color:#000;transform:scaleX(0.9909);">20</span>
<span class="t" style="left:201.50px;top:444.30px;font-size:13px;color:#000;transform:scaleX(1.0135);">2011</span>
<span class="t" style="left:235.60px;top:444.30px;font-size:13px;color:#000;transform:scaleX(1.0018);">5105600775</span>
<span class="t" style="left:30.20px;top:463.30px;font-size:13px;color:#000;transform:scaleX(1.0046);">4500000001</span>
<span class="t" style="left:152.20px;top:463.30px;font-size:13px;color:#000;transform:scaleX(0.9909);">20</span>
<span class="t" style="left:201.50px;top:463.30px;font-size:13px;color:#000;transform:scaleX(1.0135);">2011</span>
<span class="t" style="left:235.60px;top:463.30px;font-size:13px;color:#000;transform:scaleX(1.0018);">5105600776</span>
<span class="t" style="left:30.20px;top:482.30px;font-size:13px;color:#000;transform:scaleX(1.0046);">4500000001</span>
<span class="t" style="left:152.20px;top:482.30px;font-size:13px;color:#000;transform:scaleX(0.9909);">20</span>
<span class="t" style="left:201.50px;top:482.30px;font-size:13px;color:#000;transform:scaleX(1.0135);">2011</span>
<span class="t" style="left:235.60px;top:482.30px;font-size:13px;color:#000;transform:scaleX(1.0018);">5105600777</span>
<span class="t" style="left:30.20px;top:501.30px;font-size:13px;color:#000;transform:scaleX(1.0046);">4500000001</span>
<span class="t" style="left:152.20px;top:501.30px;font-size:13px;color:#000;transform:scaleX(0.9909);">20</span>
<span class="t" style="left:201.50px;top:501.30px;font-size:13px;color:#000;transform:scaleX(1.0135);">2011</span>
<span class="t" style="left:235.60px;top:501.30px;font-size:13px;color:#000;transform:scaleX(1.0018);">5105600778</span>
</div>
<div style="position:absolute;left:0;top:555.4px;width:1024px;height:1.6px;overflow:hidden;font-size:10px;line-height:1;color:#333;white-space:pre"><!--BOTTOMTXT-->
<span style="position:absolute;left:343px;top:-0.6px">14</span><span style="position:absolute;left:366px;top:-0.6px">4500000003</span><span style="position:absolute;left:435px;top:-0.6px">100</span><span style="position:absolute;left:453px;top:-0.6px">AMDTTS0 J001</span>
</div>
</body></html>
